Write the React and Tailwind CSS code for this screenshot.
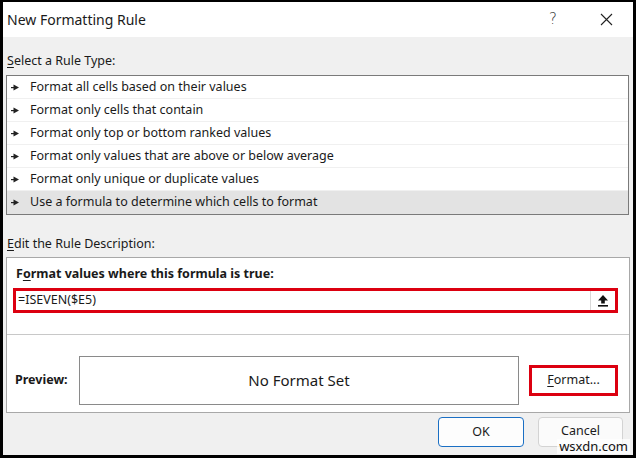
import React from "react";

function Arrow() {
  return (
    <svg width="8" height="7" viewBox="0 0 8 7" className="shrink-0">
      <rect x="0" y="3" width="4" height="1.2" fill="#222" />
      <polygon points="2.5,0.6 8,3.6 2.5,6.6" fill="#222" />
    </svg>
  );
}

const rules = [
  "Format all cells based on their values",
  "Format only cells that contain",
  "Format only top or bottom ranked values",
  "Format only values that are above or below average",
  "Format only unique or duplicate values",
  "Use a formula to determine which cells to format",
];

export default function App() {
  return (
    <div className="w-[636px] h-[458px] overflow-hidden relative bg-[#f0f0f0] border-black border-t-2 border-l-[3px] border-r-[3px] border-b-[3px] flex flex-col font-['Noto_Sans',sans-serif] text-[#1a1a1a]">
      {/* Title bar */}
      <div className="h-[35px] bg-white flex items-center shrink-0">
        <div className="pl-[4px] text-[14px] text-[#1a1a1a] flex-1">New Formatting Rule</div>
        <div className="w-[20px] text-center text-[15px] text-[#333] mr-[37px] font-['DejaVu_Sans',sans-serif] font-light">?</div>
        <svg width="13" height="13" viewBox="0 0 13 13" className="mr-[20px]">
          <path d="M1 1 L12 12 M12 1 L1 12" stroke="#222" strokeWidth="1.1" />
        </svg>
      </div>

      <div className="px-[3px] flex flex-col flex-1">
        <div className="pt-[16px] h-[38px] text-[12.5px] leading-[16px] pl-[1px]">
          <span className="underline underline-offset-2">S</span>elect a Rule Type:
        </div>
        <div className="border border-[#7a7a7a] bg-white mr-[1px]">
          {rules.map((r, i) => (
            <div
              key={r}
              className={
                "h-[23px] flex items-center gap-[11px] pl-[4px] text-[12.5px] border-[#f0f0f0] " +
                (i < rules.length - 1 ? "border-b " : "") +
                (i === rules.length - 1 ? "bg-[#e3e3e3]" : "")
              }
            >
              <Arrow />
              <span>{r}</span>
            </div>
          ))}
        </div>

        <div className="mt-[21px] text-[12.5px] leading-[16px] pl-[1px]">
          <span className="underline underline-offset-2">E</span>dit the Rule Description:
        </div>

        <div className="mt-[5px] border border-[#a8a8a8] bg-white flex flex-col h-[156px]">
          <div className="pt-[8px] pl-[9px] text-[12.5px] leading-[16px] font-bold">
            F<span className="underline underline-offset-2">o</span>rmat values where this formula is true:
          </div>
          <div className="mt-[6px] ml-[6px] mr-[11px] h-[25px] border-[3px] border-[#dc0010] flex bg-white">
            <div className="flex-1 flex items-center pl-[2px] text-[12.5px]">=ISEVEN($E5)</div>
            <div className="w-[25px] border-l border-[#d8d8d8] flex items-center justify-center">
              <svg width="10" height="12" viewBox="0 0 10 12">
                <polygon points="5,0 10,5.5 6.8,5.5 6.8,8.5 3.2,8.5 3.2,5.5 0,5.5" fill="#111" />
                <rect x="0" y="10" width="10" height="1.6" fill="#111" />
              </svg>
            </div>
          </div>
          <div className="mt-[21px] border-t border-[#c8c8c8]" />
          <div className="mt-[21px] flex items-center">
            <div className="pl-[8px] w-[72px] text-[12.5px] font-bold">Preview:</div>
            <div className="w-[440px] h-[49px] border border-[#8a8a8a] flex items-center justify-center text-[15px]">
              No Format Set
            </div>
            <div className="ml-[10px] w-[89px] h-[31px] border-[3px] border-[#dc0010] flex items-center justify-center text-[12.5px]">
              <span>
                <span className="underline underline-offset-2">F</span>ormat...
              </span>
            </div>
          </div>
        </div>

        <div className="mt-[4px] flex justify-end gap-[14px] mr-[7px]">
          <div className="w-[86px] h-[30px] rounded-[4px] border border-[#1a6fc4] bg-[#fdfdfd] flex items-center justify-center text-[12.5px]">
            OK
          </div>
          <div className="w-[85px] h-[30px] rounded-[4px] border border-[#d3d3d3] bg-[#fbfbfb] flex items-start pt-[4px] justify-center text-[12.5px]">
            Cancel
          </div>
        </div>
      </div>

      <div className="absolute right-[3px] bottom-[1px] bg-white/70 px-[2px] text-[13px] leading-[15px] text-[#111]">
        wsxdn.com
      </div>
    </div>
  );
}
